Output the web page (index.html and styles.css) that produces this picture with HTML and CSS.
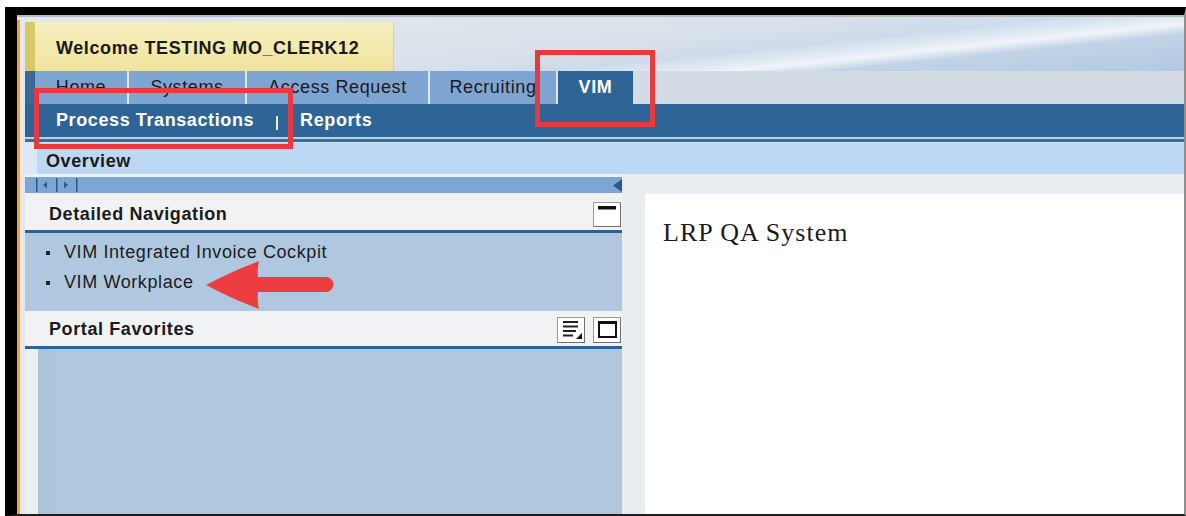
FILE: index.html
```html
<!DOCTYPE html>
<html lang="en">
<head>
<meta charset="utf-8">
<title>Portal – VIM</title>
<link rel="stylesheet" href="styles.css">
</head>
<body>
<div class="screen">
  <div class="frame">
    <div class="frame-inner">
      <div class="edge"></div>
      <div class="portal">
        <header class="masthead">
          <div class="welcome">Welcome TESTING MO_CLERK12</div>
          <div class="banner"></div>
        </header>

        <nav class="tabs">
          <span class="tab tab-home">Home</span>
          <span class="tab tab-systems">Systems</span>
          <span class="tab tab-access">Access Request</span>
          <span class="tab tab-recruiting">Recruiting</span>
          <span class="tab tab-vim is-active">VIM</span>
        </nav>

        <nav class="subnav">
          <span class="subnav-item">Process Transactions</span>
          <span class="subnav-sep"></span>
          <span class="subnav-item">Reports</span>
        </nav>
        <div class="rule"></div>

        <div class="overview">Overview</div>

        <div class="workspace">
          <aside class="sidebar">
            <div class="collapse-bar">
              <svg class="pager" width="42" height="14" viewBox="0 0 42 14">
                <rect x="0" y="0" width="1.5" height="14" fill="#2b5b8b"/>
                <polygon points="7,7 11,3.5 11,10.5" fill="#2b5b8b"/>
                <rect x="20" y="0" width="1.5" height="14" fill="#2b5b8b"/>
                <polygon points="32,7 28,3.5 28,10.5" fill="#2b5b8b"/>
                <rect x="40" y="0" width="1.5" height="14" fill="#2b5b8b"/>
              </svg>
              <svg class="collapse" width="9" height="13" viewBox="0 0 9 13">
                <polygon points="0,6.5 9,0 9,13" fill="#2a5b8d"/>
              </svg>
            </div>

            <section class="panel">
              <div class="panel-head head-nav">
                <span class="panel-title">Detailed Navigation</span>
                <span class="tool-btn">
                  <svg width="26" height="23" viewBox="0 0 26 23">
                    <rect x="4" y="3" width="18" height="3.5" fill="#111"/>
                  </svg>
                </span>
              </div>
              <ul class="nav-list">
                <li>VIM Integrated Invoice Cockpit</li>
                <li>VIM Workplace</li>
              </ul>
            </section>

            <section class="panel panel-fill">
              <div class="panel-head head-fav">
                <span class="panel-title">Portal Favorites</span>
                <span class="tools">
                  <span class="tool-btn">
                    <svg width="26" height="24" viewBox="0 0 26 24">
                      <rect x="5" y="3" width="15" height="2" fill="#222"/>
                      <rect x="5" y="7.5" width="15" height="2" fill="#222"/>
                      <rect x="5" y="12" width="13" height="2" fill="#222"/>
                      <rect x="5" y="16.5" width="10" height="2" fill="#222"/>
                      <polygon points="24,15 24,21 18,21" fill="#111"/>
                    </svg>
                  </span>
                  <span class="tool-btn">
                    <svg width="26" height="24" viewBox="0 0 26 24">
                      <rect x="5" y="4" width="17" height="15" fill="none" stroke="#111" stroke-width="2"/>
                      <rect x="4" y="3" width="19" height="3" fill="#111"/>
                    </svg>
                  </span>
                </span>
              </div>
              <div class="fav-body"></div>
            </section>
          </aside>

          <main class="content">
            <div class="page">
              <p>LRP QA System</p>
            </div>
          </main>
        </div>
      </div>
    </div>
  </div>

  <!-- highlight marks drawn over the portal -->
  <div class="callout callout-sub"></div>
  <div class="callout callout-tab"></div>
  <svg class="pointer" width="136" height="54" viewBox="0 0 136 54">
    <path d="M6 27 Q30 14 59 3 Q57 11 58 19 L126 19 A7.5 7.5 0 0 1 126 34 L58 34 Q57 43 59 51 Q30 40 6 27 Z" fill="#ee3d41"/>
  </svg>
</div>
</body>
</html>
```

FILE: styles.css
```css
* { box-sizing: border-box; }

html, body {
  margin: 0;
  padding: 0;
  background: #ffffff;
}

body {
  font-family: "Liberation Sans", Arial, sans-serif;
  font-size: 18px;
  letter-spacing: 0.6px;
  color: #1b1b1b;
}

.screen {
  position: relative;
  width: 1186px;
  height: 516px;
  padding: 7px 0 0 5px;
  overflow: hidden;
}

.frame {
  width: 1181px;
  height: 509px;
  border-top: 8px solid #000;
  border-left: 12px solid #000;
  border-right: 2px solid #8e8e8e;
  border-bottom: 2px solid #1e1e1e;
}

.frame-inner {
  height: 499px;
  border-top: 2px solid #b7b9bb;
  display: flex;
}

.edge {
  width: 8px;
  flex: none;
  background:
    linear-gradient(#e6eaee, #e6eaee) top left / 100% 3px no-repeat,
    linear-gradient(to right, #efa13a 0 3px, #e4e8ec 3px 8px);
}

.portal {
  flex: 1;
  min-width: 0;
  display: flex;
  flex-direction: column;
}

/* masthead with welcome strip and banner swoosh */
.masthead {
  height: 54px;
  flex: none;
  display: flex;
  align-items: flex-end;
  background:
    linear-gradient(174deg, rgba(255,255,255,0) 62%, rgba(244,248,252,0.9) 73%, rgba(255,255,255,0) 79%),
    linear-gradient(174deg, #e3e8ee 0%, #d9e1ea 50%, #c6d6e7 72%, #b3c9e1 100%);
}

.welcome {
  width: 369px;
  height: 49px;
  border-left: 10px solid #d7c965;
  border-right: 1px solid #ddd28a;
  background: linear-gradient(#f6efbf, #efe49d);
  font-weight: bold;
  padding: 4px 0 0 21px;
  display: flex;
  align-items: center;
  color: #1a1a1a;
}

.banner { flex: 1; align-self: stretch; }

/* top level tabs */
.tabs {
  height: 33px;
  flex: none;
  display: flex;
  background: #d3dbe4;
  border-left: 10px solid #3a6997;
}

.tab {
  display: flex;
  align-items: center;
  justify-content: center;
  background: #7ea5d1;
  border-right: 2px solid #dfe8f2;
  color: #1a1a1a;
}

.tab-home { width: 94px; }
.tab-systems { width: 118px; }
.tab-access { width: 183px; }
.tab-recruiting { width: 128px; }
.tab-vim { width: 75px; }

.tab.is-active {
  background: #2f6596;
  border-right: none;
  color: #fff;
  font-weight: bold;
}

/* second level navigation */
.subnav {
  height: 33px;
  flex: none;
  display: flex;
  align-items: center;
  padding-left: 31px;
  background: #2f6596;
  color: #fff;
  font-weight: bold;
}

.subnav-sep {
  width: 2px;
  height: 14px;
  margin: 4px 22px 0 22px;
  background: #e3ebf3;
}

.rule {
  height: 6px;
  flex: none;
  background: linear-gradient(#bcd1e5 0 2px, #3c6c99 2px 5px, #d3e4f5 5px 6px);
}

.overview {
  height: 31px;
  flex: none;
  display: flex;
  align-items: center;
  padding: 5px 0 0 9px;
  border-left: 12px solid #dbe8f5;
  background: #bdd8f2;
  font-weight: bold;
}

/* work area: navigation panels and page */
.workspace {
  flex: 1;
  display: flex;
  min-height: 0;
}

.sidebar {
  width: 597px;
  flex: none;
  display: flex;
  flex-direction: column;
  background: #eef1f4;
}

.collapse-bar {
  margin-top: 3px;
  height: 16px;
  flex: none;
  display: flex;
  align-items: center;
  justify-content: space-between;
  padding-left: 11px;
  background: #7ea6d3;
}

.panel { display: flex; flex-direction: column; flex: none; }
.panel-fill { flex: 1; min-height: 0; }

.panel-head {
  display: flex;
  align-items: center;
  justify-content: space-between;
  padding: 0 1px 0 24px;
  background: #f1f2f3;
  border-bottom: 3px solid #2d6394;
  font-weight: bold;
  flex: none;
}

.head-nav { height: 40px; padding-top: 6px; }
.head-fav { height: 38px; padding-top: 2px; }

.tools { display: flex; gap: 8px; }

.tool-btn {
  display: flex;
  width: 28px;
  height: 26px;
  background: #fff;
  border: 1px solid #9a9a9a;
  border-right-color: #6f6f6f;
  border-bottom-color: #6f6f6f;
}
.head-nav .tool-btn { height: 25px; }

.nav-list {
  margin: 0;
  height: 78px;
  padding: 4px 0 0 21px;
  list-style: none;
  background: #afc8df;
  color: #1c1c1c;
}

.nav-list li {
  display: flex;
  align-items: center;
  height: 30px;
}

.nav-list li::before {
  content: "";
  width: 4px;
  height: 4px;
  margin: 2px 14px 0 0;
  background: #222;
}

.fav-body {
  flex: 1;
  background: linear-gradient(to right, #eceff2 0 13px, #abc4dc 13px 30px, #afc8df 30px 578px, #b2c6dd 578px);
}

.content {
  flex: 1;
  display: flex;
  padding: 20px 0 0 23px;
  background: #e9edf1;
}

.page {
  flex: 1;
  background: #fff;
  padding: 24px 0 0 18px;
  font-family: "Liberation Serif", "Times New Roman", serif;
  font-size: 26px;
  line-height: 30px;
  letter-spacing: 1px;
  color: #1a1a1a;
}

.page p { margin: 0; }

/* highlight marks */
.callout {
  position: absolute;
  border: 5px solid #e63a3f;
}

.callout-sub { left: 34px; top: 88px; width: 259px; height: 61px; }
.callout-tab { left: 535px; top: 50px; width: 120px; height: 77px; }

.pointer {
  position: absolute;
  left: 200px;
  top: 258px;
}
```
